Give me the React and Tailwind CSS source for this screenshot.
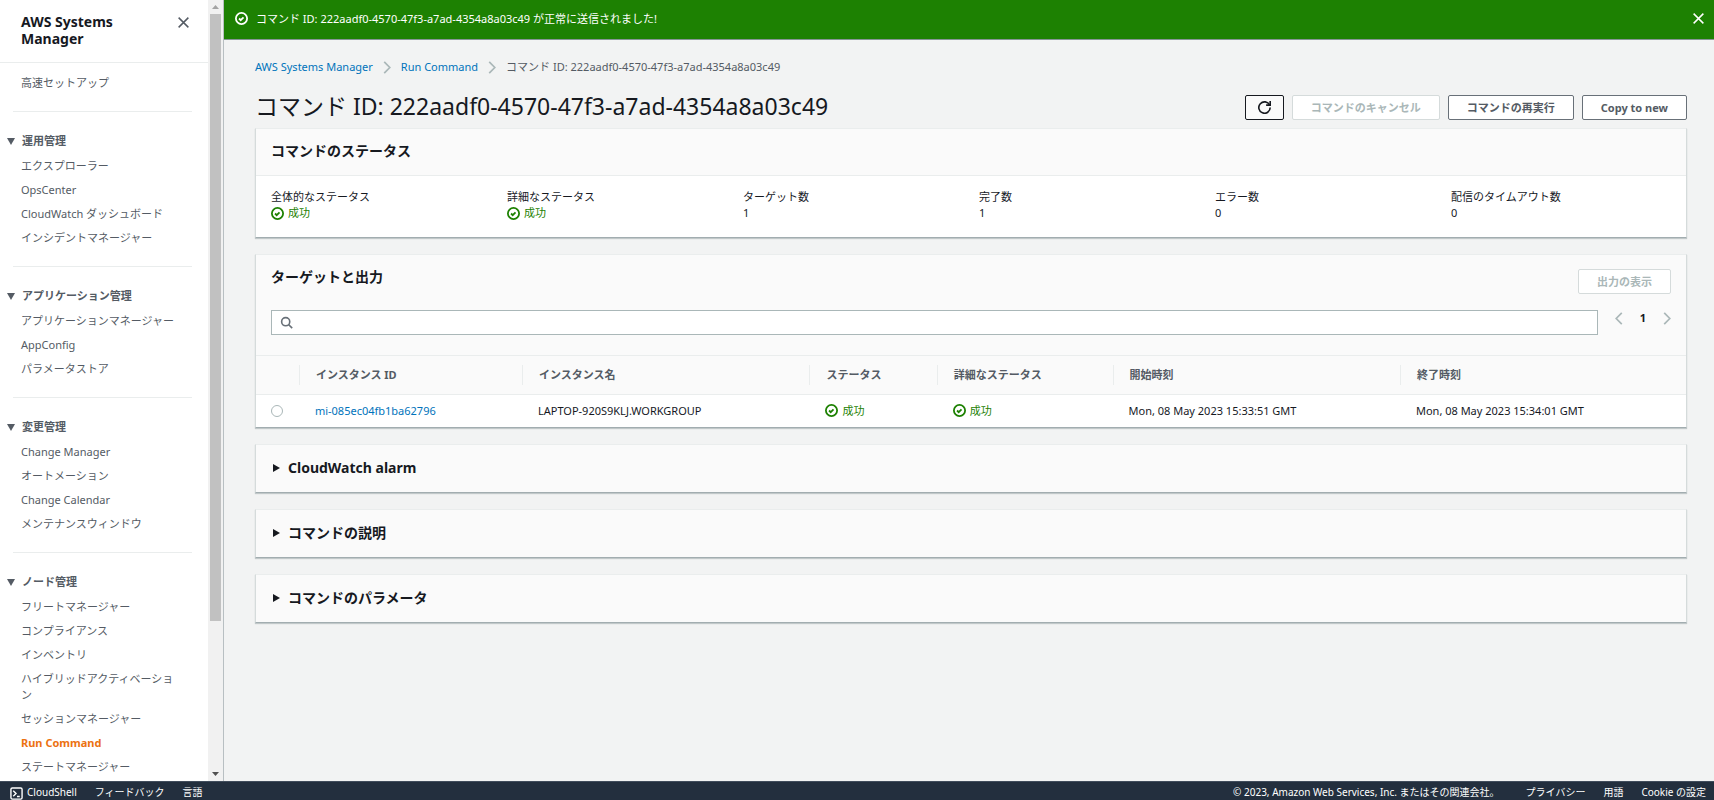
import { useState } from 'react';

const NAV_SECTIONS = [
  {
    title: '運用管理',
    items: ['エクスプローラー', 'OpsCenter', 'CloudWatch ダッシュボード', 'インシデントマネージャー'],
  },
  {
    title: 'アプリケーション管理',
    items: ['アプリケーションマネージャー', 'AppConfig', 'パラメータストア'],
  },
  {
    title: '変更管理',
    items: ['Change Manager', 'オートメーション', 'Change Calendar', 'メンテナンスウィンドウ'],
  },
  {
    title: 'ノード管理',
    items: [
      'フリートマネージャー',
      'コンプライアンス',
      'インベントリ',
      'ハイブリッドアクティベーション',
      'セッションマネージャー',
      'Run Command',
      'ステートマネージャー',
    ],
  },
];

const COMMAND_ID = '222aadf0-4570-47f3-a7ad-4354a8a03c49';

const STATUS_FIELDS = [
  { label: '全体的なステータス', value: '成功', success: true },
  { label: '詳細なステータス', value: '成功', success: true },
  { label: 'ターゲット数', value: '1' },
  { label: '完了数', value: '1' },
  { label: 'エラー数', value: '0' },
  { label: '配信のタイムアウト数', value: '0' },
];

const COLUMNS = ['インスタンス ID', 'インスタンス名', 'ステータス', '詳細なステータス', '開始時刻', '終了時刻'];

function CheckCircle() {
  return (
    <svg viewBox="0 0 16 16" className="size-[13px] shrink-0" fill="none" stroke="currentColor" strokeWidth="2.2" aria-hidden="true">
      <circle cx="8" cy="8" r="6.9" />
      <path d="m5 8 2 2 3.5-3.5" />
    </svg>
  );
}

function CloseIcon() {
  return (
    <svg viewBox="0 0 16 16" className="size-[13px]" fill="none" stroke="currentColor" strokeWidth="1.8" aria-hidden="true">
      <path d="m2 2 12 12M14 2 2 14" />
    </svg>
  );
}

function Chevron({ left }) {
  return (
    <svg viewBox="0 0 8 14" className="h-[13px] w-2 shrink-0 text-[#aab7b8]" fill="none" stroke="currentColor" strokeWidth="1.8" aria-hidden="true">
      <path d={left ? 'M7 1 1 7l6 6' : 'm1 1 6 6-6 6'} />
    </svg>
  );
}

function Success({ children }) {
  return (
    <span className="flex items-center gap-1 text-[#1d8102]">
      <CheckCircle />
      {children}
    </span>
  );
}

function Button({ children, disabled, onClick }) {
  return (
    <button
      type="button"
      disabled={disabled}
      onClick={onClick}
      className={`h-[25px] rounded-[2px] border bg-white px-[18px] text-[11px] font-bold whitespace-nowrap ${
        disabled ? 'border-[#d5dbdb] text-[#aab7b8]' : 'border-[#687078] text-[#545b64]'
      }`}
    >
      {children}
    </button>
  );
}

function Card({ children }) {
  return (
    <section className="border border-t-[#eaeded] border-r-[#d5dbdb] border-b-[#a2adb0] border-l-[#d5dbdb] bg-white shadow-[0_1px_1px_rgba(0,28,36,0.2)]">
      {children}
    </section>
  );
}

function ExpandableCard({ title }) {
  const [open, setOpen] = useState(false);
  return (
    <Card>
      <h2>
        <button
          type="button"
          aria-expanded={open}
          onClick={() => setOpen(!open)}
          className="flex h-[47px] w-full items-center gap-2 bg-[#fafafa] px-4 text-left text-[14px] font-bold"
        >
          <svg viewBox="0 0 8 8" className={`size-2 ${open ? 'rotate-90' : ''}`} fill="currentColor" aria-hidden="true">
            <path d="M1 0v8l7-4z" />
          </svg>
          {title}
        </button>
      </h2>
    </Card>
  );
}

function NavSection({ section }) {
  const [open, setOpen] = useState(true);
  return (
    <div>
      <div className="mr-4 ml-[13px] border-t border-[#eaeded]" />
      <button
        type="button"
        aria-expanded={open}
        onClick={() => setOpen(!open)}
        className="mt-5 mb-1 flex items-center gap-[7px] pl-[7px] text-[11px] leading-[18px] font-bold"
      >
        <svg viewBox="0 0 8 7" className={`h-[7px] w-2 ${open ? '' : '-rotate-90'}`} fill="currentColor" aria-hidden="true">
          <path d="M0 0h8L4 7z" />
        </svg>
        {section.title}
      </button>
      {open && (
        <ul className="pb-4">
          {section.items.map((item) => (
            <li key={item} className="py-1 pr-[29px] pl-[21px]">
              <a href="#" className={`block ${item === 'Run Command' ? 'font-bold text-[#ec7211]' : ''}`}>
                {item}
              </a>
            </li>
          ))}
        </ul>
      )}
    </div>
  );
}

function Sidebar() {
  return (
    <aside className="flex w-[224px] shrink-0 border-r border-[#b8bfc2] bg-white text-[#545b64]">
      <div className="min-w-0 flex-1 overflow-hidden">
        <div className="flex items-start justify-between border-b border-[#eaeded] pt-[13px] pr-[18px] pb-[15px] pl-[21px]">
          <h2 className="w-28 text-[14px] leading-[17px] font-bold text-[#16191f]">AWS Systems Manager</h2>
          <button type="button" aria-label="閉じる" className="mt-[3px]">
            <CloseIcon />
          </button>
        </div>
        <nav>
          <a href="#" className="block pt-3 pr-[29px] pb-5 pl-[21px]">
            高速セットアップ
          </a>
          {NAV_SECTIONS.map((section) => (
            <NavSection key={section.title} section={section} />
          ))}
        </nav>
      </div>
      {/* scrollbar */}
      <div className="flex w-[15px] flex-col items-center bg-[#f1f1f1]" aria-hidden="true">
        <svg viewBox="0 0 7 4" className="my-[5px] h-1 w-[7px]" fill="#a3a3a3">
          <path d="M0 4h7L3.5 0z" />
        </svg>
        <div className="flex-1">
          <div className="h-[80.6%] w-[11px] bg-[#c1c1c1]" />
        </div>
        <svg viewBox="0 0 7 4" className="my-[5px] h-1 w-[7px]" fill="#505050">
          <path d="M0 0h7L3.5 4z" />
        </svg>
      </div>
    </aside>
  );
}

function Flash({ onClose }) {
  return (
    <div role="status" className="flex h-10 shrink-0 items-center border-b border-[#879596] bg-[#1d8102] pr-[9px] pb-[2px] pl-[11px] text-white">
      <CheckCircle />
      <p className="ml-2 flex-1">コマンド ID: {COMMAND_ID} が正常に送信されました!</p>
      <button type="button" aria-label="閉じる" onClick={onClose}>
        <CloseIcon />
      </button>
    </div>
  );
}

function TargetsCard() {
  const [query, setQuery] = useState('');
  return (
    <Card>
      <div className="bg-[#fafafa] px-[15px] pt-[14px] pb-5">
        <div className="flex items-start justify-between">
          <h2 className="text-[14px] leading-4 font-bold">ターゲットと出力</h2>
          <Button disabled>出力の表示</Button>
        </div>
        <div className="mt-4 flex items-start gap-[17px]">
          <label className="flex h-[25px] flex-1 items-center gap-2 border border-[#aab7b8] bg-white px-2">
            <svg viewBox="0 0 16 16" className="size-[13px] text-[#687078]" fill="none" stroke="currentColor" strokeWidth="2" aria-hidden="true">
              <circle cx="7" cy="7" r="5" />
              <path d="m15 15-4.5-4.5" />
            </svg>
            <input
              type="text"
              aria-label="検索"
              value={query}
              onChange={(e) => setQuery(e.target.value)}
              className="flex-1 outline-none"
            />
          </label>
          <div className="flex h-4 items-center gap-[17px]">
            <button type="button" aria-label="前へ" disabled>
              <Chevron left />
            </button>
            <span className="font-bold">1</span>
            <button type="button" aria-label="次へ" disabled>
              <Chevron />
            </button>
          </div>
        </div>
      </div>
      <table className="w-full table-fixed text-left">
        <colgroup>
          <col className="w-[3%]" />
          <col className="w-[15.6%]" />
          <col className="w-[20.1%]" />
          <col className="w-[8.9%]" />
          <col className="w-[12.3%]" />
          <col className="w-[20.1%]" />
          <col className="w-[20%]" />
        </colgroup>
        <thead className="border-y border-[#eaeded] bg-[#fafafa] text-[#545b64]">
          <tr className="h-[39px]">
            <th aria-label="選択" />
            {COLUMNS.map((column) => (
              <th key={column} className="p-0">
                <div className="border-l border-[#eaeded] pl-4 leading-5">{column}</div>
              </th>
            ))}
          </tr>
        </thead>
        <tbody>
          <tr className="h-8">
            <td className="pl-[15px]">
              <input
                type="radio"
                name="target"
                aria-label="mi-085ec04fb1ba62796"
                className="block size-3 appearance-none rounded-full border border-[#aab7b8] bg-white checked:border-4 checked:border-[#0073bb]"
              />
            </td>
            <td className="pl-4">
              <a href="#" className="text-[#0073bb]">mi-085ec04fb1ba62796</a>
            </td>
            <td className="pl-4">LAPTOP-920S9KLJ.WORKGROUP</td>
            <td className="pl-4">
              <Success>成功</Success>
            </td>
            <td className="pl-4">
              <Success>成功</Success>
            </td>
            <td className="pl-4">Mon, 08 May 2023 15:33:51 GMT</td>
            <td className="pl-4">Mon, 08 May 2023 15:34:01 GMT</td>
          </tr>
        </tbody>
      </table>
    </Card>
  );
}

function Footer() {
  return (
    <footer className="flex h-[19px] shrink-0 items-start justify-between overflow-hidden border-t border-[#414d5c] bg-[#232f3e] pt-[2px] pr-2 pl-[10px] text-[10px] text-white">
      <div className="flex gap-[18px]">
        <a href="#" className="flex items-start gap-1">
          <svg viewBox="0 0 14 14" className="mt-[3px] size-[13px]" fill="none" stroke="currentColor" strokeWidth="1.5" aria-hidden="true">
            <rect x="1" y="1" width="12" height="12" rx="1.5" />
            <path d="m3.5 4 3 3-3 3M7.5 10.2h3" />
          </svg>
          CloudShell
        </a>
        <a href="#">フィードバック</a>
        <a href="#">言語</a>
      </div>
      <div className="flex gap-[18px]">
        <span className="mr-2">© 2023, Amazon Web Services, Inc. またはその関連会社。</span>
        <a href="#">プライバシー</a>
        <a href="#">用語</a>
        <a href="#">Cookie の設定</a>
      </div>
    </footer>
  );
}

function App() {
  const [showFlash, setShowFlash] = useState(true);

  return (
    <div className="flex h-screen flex-col overflow-hidden bg-[#f2f3f3] font-['Noto_Sans','Noto_Sans_CJK_JP',sans-serif] text-[11px] leading-4 text-[#16191f]">
      <div className="flex min-h-0 flex-1">
        <Sidebar />
        <div className="flex min-w-0 flex-1 flex-col">
          {showFlash && <Flash onClose={() => setShowFlash(false)} />}
          <main className="pr-[27px] pl-[31px]">
            <nav className="mt-[19px] flex items-center gap-[10px] text-[#545b64]">
              <a href="#" className="text-[#0073bb]">AWS Systems Manager</a>
              <Chevron />
              <a href="#" className="text-[#0073bb]">Run Command</a>
              <Chevron />
              <span>コマンド ID: {COMMAND_ID}</span>
            </nav>
            <div className="mt-5 mb-2 flex items-start justify-between">
              <h1 className="text-[23px] leading-[22px]">コマンド ID: {COMMAND_ID}</h1>
              <div className="flex gap-2">
                <button
                  type="button"
                  aria-label="更新"
                  className="flex h-[25px] w-[39px] items-center justify-center rounded-[2px] border border-[#16191f] bg-[#fafafa]"
                >
                  <svg viewBox="0 0 16 16" className="size-[13px]" fill="none" stroke="currentColor" strokeWidth="2" aria-hidden="true">
                    <path d="M10 5h5V0" />
                    <path d="M15 8a7 7 0 1 1-.7-3" />
                  </svg>
                </button>
                <Button disabled>コマンドのキャンセル</Button>
                <Button>コマンドの再実行</Button>
                <Button>Copy to new</Button>
              </div>
            </div>
            <div className="flex flex-col gap-4">
              <Card>
                <h2 className="border-b border-[#eaeded] bg-[#fafafa] px-[15px] pt-[13px] pb-[15px] text-[14px] leading-[18px] font-bold">
                  コマンドのステータス
                </h2>
                <dl className="grid grid-cols-6 gap-4 px-[15px] pt-[13px] pb-4">
                  {STATUS_FIELDS.map((field) => (
                    <div key={field.label}>
                      <dt>{field.label}</dt>
                      <dd>{field.success ? <Success>{field.value}</Success> : field.value}</dd>
                    </div>
                  ))}
                </dl>
              </Card>
              <TargetsCard />
              <ExpandableCard title="CloudWatch alarm" />
              <ExpandableCard title="コマンドの説明" />
              <ExpandableCard title="コマンドのパラメータ" />
            </div>
          </main>
        </div>
      </div>
      <Footer />
    </div>
  );
}

export default App;
